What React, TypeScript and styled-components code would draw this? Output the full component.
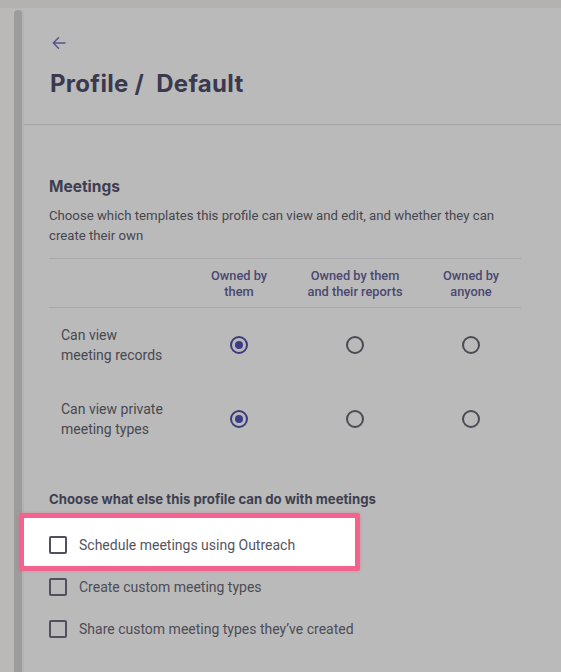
import styled, { createGlobalStyle } from "styled-components";

const GlobalStyle = createGlobalStyle`
    body {
        margin: 0;
        background: #bab9b8;
        font-family: Roboto, "Liberation Sans", sans-serif;
    }
`;

const TopStrip = styled.div`
    height: 8px;
    background: #b4b2b1;
`;

const Frame = styled.div`
    display: flex;
    min-height: 664px;
`;

const Gutter = styled.div`
    width: 24px;
    flex-shrink: 0;
    display: flex;
    padding-left: 14px;
    padding-top: 2px;
    box-sizing: border-box;
`;

const Scrollbar = styled.div`
    width: 8px;
    background: #9c9c9c;
    border-radius: 4px 4px 0 0;
    box-shadow: 2px 0 0 #b3b3b3;
`;

const Panel = styled.main`
    flex: 1;
    background: #bababa;
    padding-bottom: 24px;
`;

const Header = styled.header`
    height: 117px;
    padding: 26px 0 0 26px;
    box-sizing: border-box;
    border-bottom: 1px solid #a8a6aa;
    box-shadow: 0 1px 0 #b5b4b6;
`;

const BackButton = styled.button`
    border: none;
    background: none;
    padding: 0;
    width: 18px;
    height: 18px;
    display: block;
    color: #55548a;
    cursor: pointer;
`;

const Title = styled.h1`
    margin: 17px 0 0;
    font-family: Inter, "Open Sans", sans-serif;
    font-size: 24px;
    font-weight: 700;
    color: #3a3950;
    white-space: pre;
    letter-spacing: 0.3px;
`;

const Content = styled.section`
    padding: 52px 40px 0 25px;
`;

const SectionTitle = styled.h2`
    margin: 0;
    font-family: Inter, "Open Sans", sans-serif;
    font-size: 15.5px;
    font-weight: 700;
    color: #3e3e52;
    line-height: 20px;
`;

const Description = styled.p`
    margin: 9px 0 0;
    width: 472px;
    font-size: 13.2px;
    line-height: 20px;
    color: #46464f;
`;

const Table = styled.div`
    margin-top: 12px;
    width: 472px;
    border-top: 1px solid #a9a8ad;
`;

const TableRow = styled.div`
    display: grid;
    grid-template-columns: 132px 116px 116px 116px;
    width: 480px;
    height: 74px;
    align-items: center;
`;

const HeadRow = styled(TableRow)`
    height: 49px;
    position: relative;
    &::after {
        content: "";
        position: absolute;
        left: 0;
        bottom: 0;
        width: 472px;
        border-bottom: 1px solid #a9a8ad;
    }
`;

const HeadCell = styled.div`
    text-align: center;
    font-size: 12.8px;
    font-weight: 500;
    line-height: 16px;
    color: #4a4870;
`;

const RowLabel = styled.div`
    padding-left: 12px;
    font-size: 14px;
    line-height: 20px;
    color: #484852;
`;

const RadioCell = styled.div`
    display: flex;
    justify-content: center;
`;

const Radio = styled.span<{ $checked?: boolean }>`
    width: 18px;
    height: 18px;
    box-sizing: border-box;
    border-radius: 50%;
    border: 2px solid ${(p) => (p.$checked ? "#3d3c7e" : "#4b4b54")};
    display: flex;
    align-items: center;
    justify-content: center;
    &::after {
        content: "";
        width: 8px;
        height: 8px;
        border-radius: 50%;
        background: ${(p) => (p.$checked ? "#3d3c86" : "transparent")};
    }
`;

const SubTitle = styled.h3`
    margin: 34px 0 0;
    font-family: Inter, "Open Sans", sans-serif;
    font-size: 13.2px;
    font-weight: 700;
    color: #3f3f50;
    line-height: 18px;
`;

const OptionList = styled.div`
    margin-top: 5px;
    display: flex;
    flex-direction: column;
`;

const Option = styled.label<{ $highlight?: boolean }>`
    display: flex;
    align-items: center;
    gap: 12px;
    height: 42px;
    font-size: 14px;
    color: ${(p) => (p.$highlight ? "#55555f" : "#4c4c56")};
    ${(p) =>
        p.$highlight
            ? `
        margin-left: -30px;
        padding: 6px 0 0 25px;
        width: 341px;
        box-sizing: border-box;
        height: 58px;
        background: #ffffff;
        border: 5px solid #f2638d;
        border-radius: 2px;
        box-shadow: 0 0 3px rgba(240, 90, 130, 0.5);
        margin-bottom: -5px;
    `
            : ""}
`;

const Checkbox = styled.span`
    width: 18px;
    height: 18px;
    box-sizing: border-box;
    border: 2px solid #50505e;
    border-radius: 2px;
    flex-shrink: 0;
`;

const rows = [
    { label: ["Can view", "meeting records"], checked: 0 },
    { label: ["Can view private", "meeting types"], checked: 0 },
];

const options = [
    { text: "Schedule meetings using Outreach", highlight: true },
    { text: "Create custom meeting types" },
    { text: "Share custom meeting types they\u2019ve created" },
];

function App() {
    return (
        <>
            <GlobalStyle />
            <TopStrip />
            <Frame>
                <Gutter>
                    <Scrollbar />
                </Gutter>
                <Panel>
                    <Header>
                        <BackButton aria-label="Back">
                            <svg width="18" height="18" viewBox="0 0 18 18" fill="none">
                                <path
                                    d="M15 9H3.5M8.5 3.8L3.3 9l5.2 5.2"
                                    stroke="currentColor"
                                    strokeWidth="1.5"
                                    strokeLinecap="round"
                                    strokeLinejoin="round"
                                />
                            </svg>
                        </BackButton>
                        <Title>Profile /  Default</Title>
                    </Header>
                    <Content>
                        <SectionTitle>Meetings</SectionTitle>
                        <Description>
                            Choose which templates this profile can view and edit, and whether they can create their own
                        </Description>
                        <Table>
                            <HeadRow>
                                <div />
                                <HeadCell>Owned by<br />them</HeadCell>
                                <HeadCell>Owned by them<br />and their reports</HeadCell>
                                <HeadCell>Owned by<br />anyone</HeadCell>
                            </HeadRow>
                            {rows.map((row) => (
                                <TableRow key={row.label.join(" ")}>
                                    <RowLabel>
                                        {row.label[0]}
                                        <br />
                                        {row.label[1]}
                                    </RowLabel>
                                    {[0, 1, 2].map((i) => (
                                        <RadioCell key={i}>
                                            <Radio $checked={row.checked === i} />
                                        </RadioCell>
                                    ))}
                                </TableRow>
                            ))}
                        </Table>
                        <SubTitle>Choose what else this profile can do with meetings</SubTitle>
                        <OptionList>
                            {options.map((o) => (
                                <Option key={o.text} $highlight={o.highlight}>
                                    <Checkbox />
                                    {o.text}
                                </Option>
                            ))}
                        </OptionList>
                    </Content>
                </Panel>
            </Frame>
        </>
    );
}

export default App;
